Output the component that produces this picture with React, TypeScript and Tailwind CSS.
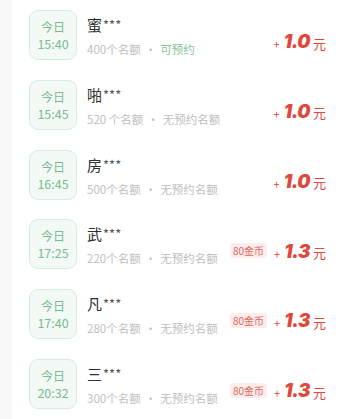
import * as React from 'react';

interface Slot {
  time: string;
  name: string;
  quota: string;
  status: string;
  open: boolean;
  coin?: string;
  amount: string;
}

const slots: Slot[] = [
  { time: '15:40', name: '蜜', quota: '400个名额', status: '可预约', open: true, amount: '1.0' },
  { time: '15:45', name: '啪', quota: '520 个名额', status: '无预约名额', open: false, amount: '1.0' },
  { time: '16:45', name: '房', quota: '500个名额', status: '无预约名额', open: false, amount: '1.0' },
  { time: '17:25', name: '武', quota: '220个名额', status: '无预约名额', open: false, coin: '80金币', amount: '1.3' },
  { time: '17:40', name: '凡', quota: '280个名额', status: '无预约名额', open: false, coin: '80金币', amount: '1.3' },
  { time: '20:32', name: '三', quota: '300个名额', status: '无预约名额', open: false, coin: '80金币', amount: '1.3' },
];

const cjk = { fontFamily: '"Noto Sans CJK SC", "Noto Sans", sans-serif' };

const SlotRow: React.FC<{ slot: Slot }> = ({ slot }) => (
  <div className="flex h-[72.8px] items-start pt-[10px]">
    <div className="flex h-[50px] w-[48px] shrink-0 flex-col items-center justify-center rounded-[9px] border border-[#d6ecdd] bg-[#f3faf5] text-[#79bb90]">
      <span className="text-[12px] leading-[17px]">今日</span>
      <span className="text-[12.5px] leading-[17px]">{slot.time}</span>
    </div>
    <div className="ml-[10px] flex min-w-0 flex-1 flex-col pt-[4px]">
      <div className="flex items-center text-[15px] leading-[22px] text-[#2e2e2e]">
        <span>{slot.name}</span>
        <span className="ml-[1px] text-[13px] text-[#555]">***</span>
      </div>
      <div className="mt-[5px] text-[11.5px] leading-[16px] text-[#c0c0c0]">
        {slot.quota}
        <span className="mx-[4px]">·</span>
        <span className={slot.open ? 'text-[#86c49c]' : ''}>{slot.status}</span>
      </div>
    </div>
    <div className="flex items-center self-center pr-[15px] pt-[3px]">
      {slot.coin && (
        <span className="mr-[7px] rounded-[3px] bg-[#fdeeec] px-[3px] text-[10px] leading-[15px] text-[#e0655c]">
          {slot.coin}
        </span>
      )}
      <span className="mt-[6px] text-[11px] text-[#e0483c]">+</span>
      <span
        className="ml-[4px] text-[18.5px] font-black italic leading-none tracking-[-0.5px] text-[#e0483c]"
        style={{ fontFamily: 'Inter, Roboto, sans-serif' }}
      >
        {slot.amount}
      </span>
      <span className="ml-[3px] mt-[4px] text-[13px] text-[#e0483c]">元</span>
    </div>
  </div>
);

export default function App() {
  return (
    <div className="flex h-[419px] w-[341px] overflow-hidden bg-white" style={cjk}>
      <div className="w-[12px] shrink-0 bg-[#f8f8f8]" />
      <div className="flex flex-1 flex-col pl-[17px]">
        {slots.map((s) => (
          <SlotRow key={s.time} slot={s} />
        ))}
      </div>
    </div>
  );
}
